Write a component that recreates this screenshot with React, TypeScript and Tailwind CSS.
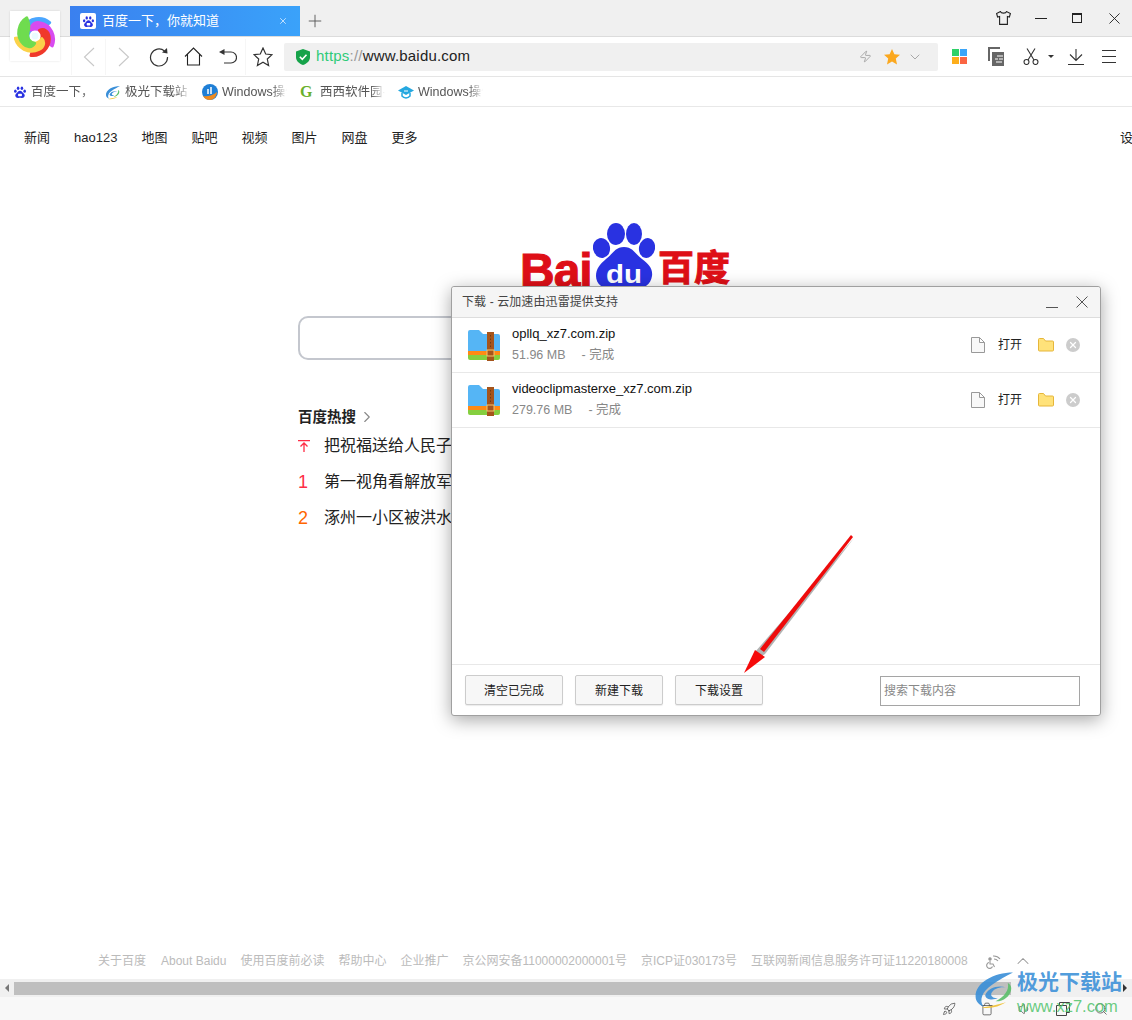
import { ChevronDown, ChevronRight, ChevronUp, Plus, Rocket, Search, Trash, Volume1, X, Zap } from 'lucide-react';

const font = "font-['Liberation_Sans','Noto_Sans_CJK_SC',sans-serif]";

function PawIcon({ className }: { className: string }) {
  return (
    <svg viewBox="0 0 33 30" className={className} fill="#2932e1">
      <ellipse cx="12" cy="6" rx="3" ry="4.2" />
      <ellipse cx="21" cy="6" rx="3" ry="4.2" />
      <ellipse cx="5.500" cy="13" rx="3" ry="4" />
      <ellipse cx="27.500" cy="13" rx="3" ry="4" />
      <path d="M16.500 12c4 0 5 3.500 7.500 5.500 3 2.300 4 4.300 3.500 7-.6 3.500-4 4.800-7 4.500-1.500-.1-2.700-.6-4-.6s-2.500.5-4 .6c-3 .3-6.400-1-7-4.500-.5-2.700.5-4.700 3.500-7C11.500 15.500 12.500 12 16.500 12z" />
      <rect x="12" y="19" width="9" height="6" rx="1.500" fill="#fff" />
    </svg>
  );
}

function LogoPaw() {
  return (
    <svg viewBox="0 0 62 66" className="w-[62px] h-[66px] shrink-0" fill="#2932e1">
      <ellipse cx="23" cy="11" rx="9" ry="11" />
      <ellipse cx="41" cy="11" rx="8" ry="11" />
      <ellipse cx="8.500" cy="25" rx="8.500" ry="10" transform="rotate(-12 8.500 25)" />
      <ellipse cx="54" cy="25" rx="8" ry="10" transform="rotate(12 54 25)" />
      <path d="M31 24c9 0 11 7 18 12 7 5 11 10 10 17-1 8-8 13-16 13H18C10 66 3 61 3 53c0-7 4-12 10-17 7-5 9-12 18-12z" />
      <text x="31" y="60" fontSize="25" fontWeight="700" fill="#fff" textAnchor="middle" textLength="36" lengthAdjust="spacingAndGlyphs" fontFamily="Liberation Sans, sans-serif">du</text>
    </svg>
  );
}

function BrowserLogo() {
  const petals = ['#4aa6ff', '#d84bf0', '#f0392b', '#fbd24a', '#6fdc4f'];
  return (
    <svg viewBox="0 0 100 100" className="w-[42px] h-[42px]">
      {petals.map((c, i) => (
        <path
          key={c}
          d="M72 8C50 0 22 12 18 40 16 52 24 62 36 60 30 50 34 36 46 32 56 28 66 20 72 8z"
          fill={c}
          stroke={c}
          strokeWidth="7"
          strokeLinejoin="round"
          transform={`rotate(${20 + i * 72} 50 50)`}
        />
      ))}
      <circle cx="50" cy="50" r="8" fill="#eafcff" />
    </svg>
  );
}

function XzLogo({ className }: { className: string }) {
  return (
    <svg viewBox="0 0 46 44" className={className}>
      <path d="M46 2C24 2 2 14 3 30c0 5 4 9 9 11C7 34 10 24 22 16 29 11 38 6 46 2z" fill="#3a8fd8" />
      <path d="M14 28c3-8 14-12 24-9-8-1-15 2-17 7-1 4 4 6 8 5-5 3-14 3-15-3z" fill="#3a8fd8" />
      <path d="M30 35c8-2 14-8 14-15 0-3-2-5-4-6 2 8-4 16-14 21z" fill="#5bbf6a" />
      <path d="M10 42c10 2 20-1 28-6-8 2-18 5-28 6z" fill="#f0c030" />
    </svg>
  );
}

function BookmarkIcon({ kind }: { kind: string }) {
  if (kind === 'paw') return <PawIcon className="w-[14px] h-[14px]" />;
  if (kind === 'xz') return <XzLogo className="w-[15px] h-[15px]" />;
  if (kind === 'globe') {
    return (
      <svg viewBox="0 0 16 16" className="w-4 h-4">
        <circle cx="8" cy="8" r="8" fill="#1f7fd6" />
        <path d="M1 12c4 1 9 0 14-4-.5 5-4 8-7 8-3 0-5.500-1.500-7-4z" fill="#f08a1d" />
        <path d="M6 5v5M9 3v7" stroke="#fff" strokeWidth="1.500" />
      </svg>
    );
  }
  if (kind === 'g') {
    return <span className="text-[16px] leading-4 font-bold text-[#6ab02c] font-['Liberation_Serif',serif]">G</span>;
  }
  return (
    <svg viewBox="0 0 16 14" className="w-4 h-[14px]" fill="none">
      <path d="M8 1 16 5.500 8 10 0 5.500z" fill="#25a8e0" />
      <path d="M4 8v3c2 2.500 6 2.500 8 0V8" stroke="#25a8e0" strokeWidth="1.500" />
      <path d="M6 6h4" stroke="#fff" />
    </svg>
  );
}

function CrossIcon({ className }: { className: string }) {
  return (
    <svg viewBox="0 0 12 12" className={className} fill="none" stroke="currentColor" strokeWidth="1">
      <path d="M.5.500l11 11M11.500.500l-11 11" />
    </svg>
  );
}

function TilesIcon() {
  return (
    <div className="grid grid-cols-2 gap-px w-[15px] h-[15px]">
      <span className="bg-[#2ed168]" />
      <span className="bg-[#3ba5f8]" />
      <span className="bg-[#fdae1b]" />
      <span className="bg-[#fb6543]" />
    </div>
  );
}

function CopyIcon() {
  return (
    <svg viewBox="0 0 18 19" className="w-[18px] h-[19px]" fill="none">
      <path d="M13 1H2v13" stroke="#666" strokeWidth="2" />
      <path d="M5 5h12v14H5z" fill="#666" />
      <path d="M10 9h6M8 12h3M12 12h4M9 15h6" stroke="#fff" strokeWidth="1.200" />
    </svg>
  );
}

function ScissorsIcon() {
  return (
    <svg viewBox="0 0 16 17" className="w-4 h-[17px]" fill="none" stroke="#333" strokeWidth="1.100">
      <circle cx="3.500" cy="14" r="2.500" />
      <circle cx="12.500" cy="14" r="2.500" />
      <path d="M5 12 12 .5M11 12 4 .5" />
    </svg>
  );
}

function DownloadIcon() {
  return (
    <svg viewBox="0 0 16 16" className="w-4 h-4" fill="none" stroke="#333" strokeWidth="1.100">
      <path d="M8 0v11M2 5.500 8 11.500l6-6M0 15.500h16" />
    </svg>
  );
}

function MenuIcon() {
  return (
    <svg viewBox="0 0 14 13" className="w-[14px] h-[13px]" fill="none" stroke="#333" strokeWidth="1.100">
      <path d="M0 .5h14M0 6.500h14M0 12.500h14" />
    </svg>
  );
}

function ZipIcon() {
  return (
    <svg viewBox="0 0 32 32" className="w-8 h-8 shrink-0">
      <path d="M0 24h32v5a2 2 0 0 1-2 2H2a2 2 0 0 1-2-2z" fill="#85cf3f" />
      <path d="M0 20h32v6H0z" fill="#ff8a14" />
      <path d="M0 3a2 2 0 0 1 2-2h9l4 4h15a2 2 0 0 1 2 2v15H0z" fill="#55b5f5" />
      <rect x="19" y="3" width="7" height="29" fill="#a5541b" />
      <path d="M22.500 6v14" stroke="#6f3a12" strokeWidth="1" strokeDasharray="1.500 2" />
      <rect x="19" y="21" width="7" height="6" fill="#a5541b" stroke="#f3c66f" strokeWidth="1" />
    </svg>
  );
}

function DownloadRow({ name, size }: { name: string; size: string }) {
  return (
    <div className="flex items-center h-[55px] pl-4 pr-5 border-b border-[#e8e8e8] shrink-0">
      <ZipIcon />
      <div className="ml-3 flex-1 -mt-px">
        <p className="text-[13px] leading-[18px] text-[#111]">{name}</p>
        <p className="text-[12.500px] leading-[18px] mt-[3px] text-[#888]">
          {size}
          <span className="ml-4">- 完成</span>
        </p>
      </div>
      <svg viewBox="0 0 14 16" className="w-[14px] h-4 mr-[13px]" fill="#f8f8f8" stroke="#999">
        <path d="M.5.500h8l5 5v10H.5zM8.500.500v5h5" />
      </svg>
      <span className="text-[12px] text-[#222] w-[25px]">打开</span>
      <svg viewBox="0 0 16 14" className="w-4 h-[14px] ml-[15px]" fill="#ffe27a" stroke="#e6b63a">
        <path d="M.5 1.500a1 1 0 0 1 1-1h4l2 2.500h7a1 1 0 0 1 1 1v8a1 1 0 0 1-1 1h-13a1 1 0 0 1-1-1z" />
      </svg>
      <div className="ml-3 w-[14px] h-[14px] rounded-full bg-[#ccc] flex items-center justify-center">
        <X className="w-[10px] h-[10px] text-white" strokeWidth={3} />
      </div>
    </div>
  );
}

function FooterBtn({ label, width }: { label: string; width: string }) {
  return (
    <button className={`${width} h-[30px] pt-px rounded-[2px] border border-[#ccc] bg-[#f7f7f7] text-[12px] text-[#222] shadow-[0_1px_1px_rgba(0,0,0,0.08)]`}>
      {label}
    </button>
  );
}

function DownloadDialog() {
  return (
    <div className="absolute left-[451px] top-[286px] w-[650px] h-[430px] flex flex-col bg-white border border-[#a0a0a0] rounded-[3px] shadow-[0_4px_18px_rgba(0,0,0,0.35)]">
      <div className="h-[31px] flex items-center pl-[10px] pr-3 bg-[#f5f5f5] border-b border-[#ddd] rounded-t-[3px] shrink-0">
        <span className="text-[12px] tracking-[0.1px] text-[#444] flex-1">下载 - 云加速由迅雷提供支持</span>
        <span className="w-3 h-px bg-[#555] mt-[11px] mr-[18px]" />
        <CrossIcon className="w-3 h-3 text-[#555]" />
      </div>
      <DownloadRow name="opllq_xz7.com.zip" size="51.96 MB" />
      <DownloadRow name="videoclipmasterxe_xz7.com.zip" size="279.76 MB" />
      <div className="flex-1" />
      <div className="h-[51px] flex items-start pt-[10px] pl-[13px] pr-5 gap-3 border-t border-[#e8e8e8] shrink-0">
        <FooterBtn label="清空已完成" width="w-[98px]" />
        <FooterBtn label="新建下载" width="w-[88px]" />
        <FooterBtn label="下载设置" width="w-[88px]" />
        <input
          placeholder="搜索下载内容"
          className="ml-auto w-[200px] h-[30px] mt-px px-[3px] border border-[#a5a5a5] text-[12px] outline-none placeholder:text-[#888]"
        />
      </div>
    </div>
  );
}

const bookmarks = [
  { label: '百度一下，', w: 'w-[92px]', slot: 'w-[18px]', kind: 'paw' },
  { label: '极光下载站', w: 'w-[97px]', slot: 'w-[20px]', kind: 'xz' },
  { label: 'Windows操作', w: 'w-[98px]', slot: 'w-[20px]', kind: 'globe' },
  { label: '西西软件园-', w: 'w-[98px]', slot: 'w-[20px]', kind: 'g' },
  { label: 'Windows操作', w: 'w-[98px]', slot: 'w-[20px]', kind: 'hat' },
];

const navItems = ['新闻', 'hao123', '地图', '贴吧', '视频', '图片', '网盘', '更多'];

const hotItems = [
  { rank: '1', text: '第一视角看解放军', color: 'text-[#fe2d46]' },
  { rank: '2', text: '涿州一小区被洪水', color: 'text-[#f60]' },
];

const footerLinks = ['关于百度', 'About Baidu', '使用百度前必读', '帮助中心', '企业推广', '京公网安备11000002000001号', '京ICP证030173号', '互联网新闻信息服务许可证11220180008'];

export default function App() {
  return (
    <div className={`${font} relative w-[1132px] h-[1020px] overflow-hidden bg-white flex flex-col`}>
      {/* title bar */}
      <div className="h-[37px] shrink-0 bg-[#f0f0f0] border-b border-[#dcdcdc] flex items-end pl-[70px]">
        <div className="w-[230px] h-[30px] flex items-center pl-[10px] pr-[12px] bg-gradient-to-r from-[#3a80ef] to-[#3aa2fa]">
          <div className="w-4 h-4 rounded-[2px] bg-white flex items-center justify-center">
            <PawIcon className="w-[13px] h-[13px]" />
          </div>
          <span className="ml-[6px] flex-1 text-[13px] text-white">百度一下，你就知道</span>
          <X className="w-[10px] h-[10px] text-white/80" strokeWidth={2} />
        </div>
        <Plus className="w-5 h-5 mb-[5px] ml-[5px] text-[#555]" strokeWidth={1.1} />
        <div className="ml-auto flex items-center h-[36px] pr-[12px]">
          <svg viewBox="0 0 15 14" className="w-[15px] h-[14px]" fill="none" stroke="#222" strokeWidth="1.100">
            <path d="M4.500.6 .6 2.500l1 3.500 2-.6v8h7.800v-8l2 .6 1-3.500L10.500.6c-.5 2-5.500 2-6 0z" />
          </svg>
          <span className="ml-6 w-3 h-px bg-[#222]" />
          <span className="ml-[25px] w-[10px] h-[10px] border border-[#222] border-t-2" />
          <CrossIcon className="ml-[27px] w-[11px] h-[11px] text-[#222]" />
        </div>
      </div>

      {/* toolbar */}
      <div className="h-[40px] shrink-0 flex items-center bg-white border-b border-[#e5e5e5]">
        <div className="flex items-center w-[284px] pl-[71px] h-[36px]">
          <div className="w-[35px] h-full flex items-center justify-center border-x border-[#f6f6f6]">
            <svg viewBox="0 0 12 20" className="w-3 h-5" fill="none" stroke="#c8c8c8" strokeWidth="1.100">
              <path d="M11 1 1.500 10l9.500 9" />
            </svg>
          </div>
          <div className="w-[35px] h-full flex items-center justify-center">
            <svg viewBox="0 0 12 20" className="w-3 h-5" fill="none" stroke="#c8c8c8" strokeWidth="1.100">
              <path d="m1 1 9.500 9L1 19" />
            </svg>
          </div>
          <div className="w-[35px] flex justify-center">
            <svg viewBox="0 0 20 20" className="w-5 h-5" fill="none" stroke="#333" strokeWidth="1.200">
              <path d="M15.500 4A8.500 8.500 0 1 0 18.500 10" />
              <path d="M13 5.500 18.500 6.500 18 1z" fill="#333" stroke="none" />
            </svg>
          </div>
          <div className="w-[35px] flex justify-center">
            <svg viewBox="0 0 19 19" className="w-[19px] h-[19px]" fill="none" stroke="#222" strokeWidth="1.100">
              <path d="M1 9.500 9.500 1 18 9.500M3.500 7.500V18h12V7.500" />
            </svg>
          </div>
          <div className="w-[35px] h-full flex items-center justify-center border-r border-[#f6f6f6]">
            <svg viewBox="0 0 18 16" className="w-[18px] h-4" fill="none" stroke="#333" strokeWidth="1.200">
              <path d="M4 3h8a5.500 5.500 0 0 1 0 11H5" />
              <path d="M5.500 0 0 3l5.500 3z" fill="#333" stroke="none" />
            </svg>
          </div>
          <div className="w-[35px] flex justify-center -ml-px">
            <svg viewBox="0 0 20 20" className="w-5 h-5" fill="none" stroke="#333" strokeWidth="1.200">
              <path d="m10 1 2.700 6 6.300.7-4.700 4.300 1.300 6.500-5.600-3.300-5.600 3.300L5.700 12 1 7.700 7.300 7z" />
            </svg>
          </div>
        </div>
        <div className="w-[654px] h-[28px] bg-[#f0f0f0] rounded-[2px] flex items-center pl-[12px] pr-[15px]">
          <svg viewBox="0 0 14 16" className="w-[14px] h-4">
            <path d="M7 0 14 2.500V8c0 4-3 6.500-7 8-4-1.500-7-4-7-8V2.500z" fill="#16a34a" />
            <path d="M3.800 7.800 6.300 10.300 10.500 5.800" stroke="#fff" strokeWidth="1.600" fill="none" />
          </svg>
          <span className="ml-[6px] text-[15px] tracking-[0.2px] text-[#222]">
            <span className="text-[#2ecb78]">https</span>
            <span className="text-[#999]">://</span>www.baidu.com
          </span>
          <Zap className="ml-auto w-[13px] h-[13px] text-[#888]" strokeWidth={1.25} />
          <svg viewBox="0 0 16 16" className="ml-[12px] w-4 h-4" fill="#fba81f">
            <path d="m8 0 2.400 5.200 5.600.6-4.200 3.800L13 15.500 8 12.600l-5 2.900 1.200-5.900L0 5.800l5.600-.6z" />
          </svg>
          <ChevronDown className="ml-[7px] w-4 h-4 text-[#999]" strokeWidth={1.25} />
        </div>
        <div className="flex items-center pl-[14px]">
          <TilesIcon />
          <div className="ml-5"><CopyIcon /></div>
          <div className="ml-[18px]"><ScissorsIcon /></div>
          <span className="ml-[9px] border-x-[3px] border-t-[3px] border-x-transparent border-t-[#333]" />
          <div className="ml-[14px]"><DownloadIcon /></div>
          <div className="ml-[18px]"><MenuIcon /></div>
        </div>
      </div>

      {/* bookmarks */}
      <div className="h-[30px] shrink-0 flex items-center pl-[13px] border-b border-[#e8e8e8]">
        {bookmarks.map((b, i) => (
          <div key={i} className={`${b.w} flex items-center pt-px`}>
            <div className={`${b.slot} shrink-0`}>
              <BookmarkIcon kind={b.kind} />
            </div>
            <span className="w-[65px] overflow-hidden whitespace-nowrap text-[12.500px] text-[#555] [mask-image:linear-gradient(to_right,#000_78%,transparent)]">{b.label}</span>
          </div>
        ))}
      </div>

      {/* baidu page */}
      <div className="flex-1 flex flex-col min-h-0">
        <div className="flex pl-6 pt-[22px] gap-6 relative text-[13px] text-[#222] leading-[17px]">
          {navItems.map((n) => (
            <span key={n}>{n}</span>
          ))}
          <span className="absolute left-[1120px] whitespace-nowrap">设置</span>
        </div>

        <div className="h-[66px] mt-[77px] ml-[520px] flex items-end">
          <span className="text-[48px] leading-[48px] -mb-[6px] w-[73px] font-bold text-[#de0f17] tracking-[-1px] [-webkit-text-stroke:1px_#de0f17]">Bai</span>
          <LogoPaw />
          <span className="text-[36px] leading-[44px] -mb-[2px] ml-[3px] font-bold text-[#de0f17] whitespace-nowrap [-webkit-text-stroke:1px_#de0f17]">百度</span>
        </div>

        <div className="mt-[27px] ml-[298px] w-[400px] h-[44px] rounded-[10px] border-2 border-[#c4c7ce]" />

        <div className="mt-[46px] ml-[298px] flex items-center">
          <span className="text-[14.500px] font-bold text-[#222] leading-[22px]">百度热搜</span>
          <ChevronRight className="ml-[2px] w-[18px] h-[18px] text-[#888]" strokeWidth={1.5} />
        </div>
        <div className="ml-[298px] mt-[7px] flex items-center text-[16px] text-[#222] h-[22px]">
          <svg viewBox="0 0 12 12" className="w-3 h-3" fill="none" stroke="#fe2d46" strokeWidth="1.300">
            <path d="M0 .700h12M6 3v9M2.500 6.500 6 3l3.500 3.500" />
          </svg>
          <span className="ml-[14px] whitespace-nowrap">把祝福送给人民子弟</span>
        </div>
        {hotItems.map((h) => (
          <div key={h.rank} className="ml-[298px] mt-[14px] flex items-center text-[16px] text-[#222] h-[22px]">
            <span className={`${h.color} w-[26px] text-[18px]`}>{h.rank}</span>
            <span className="whitespace-nowrap">{h.text}</span>
          </div>
        ))}

        <div className="mt-auto h-[38px] pt-px flex items-center pl-[98px] gap-[14px] text-[12px] text-[#bbb] whitespace-nowrap">
          {footerLinks.map((f) => (
            <span key={f} className="first:mr-px">{f}</span>
          ))}
          <svg viewBox="0 0 16 16" className="ml-[3px] w-4 h-4" fill="none" stroke="#999" strokeWidth="1.100">
            <path d="M8 3a8 8 0 0 1 7 3M9 6a5 5 0 0 1 4 2" />
            <circle cx="5" cy="6" r="1.200" fill="#999" />
            <path d="M5 8v3h3l1.500 3M4 9.500a3 3 0 1 0 3.500 4" />
          </svg>
          <ChevronUp className="-ml-[2px] w-5 h-5 text-[#999]" strokeWidth={1.25} />
        </div>

        {/* scrollbar */}
        <div className="h-[18px] shrink-0 bg-[#f0f0f0] flex items-center">
          <span className="ml-[5px] border-y-[4px] border-r-[4px] border-y-transparent border-r-[#777]" />
          <div className="ml-[5px] w-[997px] h-[13px] bg-[#bfbfbf]" />
          <span className="ml-auto mr-[5px] border-y-[4px] border-l-[4px] border-y-transparent border-l-[#333]" />
        </div>
      </div>

      {/* status bar */}
      <div className="h-[23px] shrink-0 bg-[#f8f8f8] flex items-center pl-[942px] gap-[24px] text-[#444]">
        <Rocket className="w-[14px] h-[14px]" strokeWidth={1.25} />
        <Trash className="w-[14px] h-[14px]" strokeWidth={1.25} />
        <Volume1 className="w-[14px] h-[14px]" strokeWidth={1.25} />
        <svg viewBox="0 0 14 14" className="w-[14px] h-[14px]" fill="none" stroke="#444">
          <path d="M.5 3.500h10v10H.5zM3.500 3.500v-3h10v10h-3" />
        </svg>
        <Search className="w-[14px] h-[14px]" strokeWidth={1.25} />
      </div>

      <DownloadDialog />

      {/* browser logo */}
      <div className="absolute left-[10px] top-[11px] w-[50px] h-[50px] bg-white shadow-[0_0_2px_rgba(0,0,0,0.12)] flex items-center justify-center">
        <BrowserLogo />
      </div>

      {/* red annotation arrow */}
      <svg className="absolute left-[735px] top-[530px] w-[125px] h-[145px]" viewBox="0 0 125 145" fill="none">
        <path d="M119 8 30 124 24 128 20 122z" fill="#555" fillOpacity="0.45" />
        <path d="M116 5 118 7 29 122 25 119z" fill="#ee0b0b" />
        <path d="M9 143 20 120 30 127z" fill="#f50a0a" />
      </svg>

      {/* watermark */}
      <div className="absolute left-[973px] top-[970px] flex pointer-events-none">
        <XzLogo className="w-10 h-10 opacity-90 shrink-0" />
        <div className="ml-1">
          <p className="text-[21px] leading-[24px] font-bold text-[#3a8fd8]/90 whitespace-nowrap">极光下载站</p>
          <p className="mt-[2px] text-[16.500px] leading-[20px] text-[#4ec36a]/85 whitespace-nowrap">www.xz7.com</p>
        </div>
      </div>
    </div>
  );
}
